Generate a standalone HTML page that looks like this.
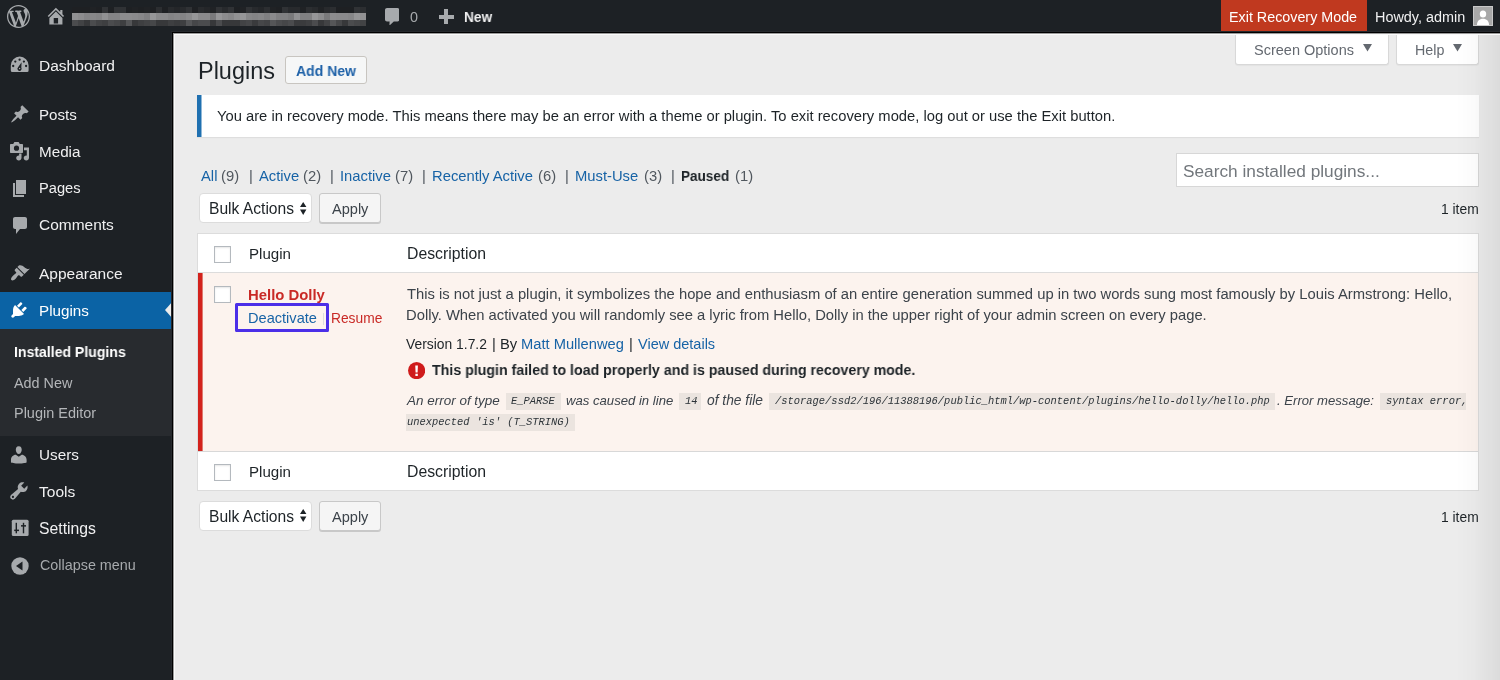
<!DOCTYPE html>
<html><head><meta charset="utf-8"><style>
html,body{margin:0;padding:0;width:1500px;height:680px;overflow:hidden;background:#ececec}
.t{position:absolute;white-space:pre;will-change:transform;}
.r{position:absolute;}
</style></head><body>
<div class="r" style="left:0px;top:0px;width:1500px;height:680px;background:#ececec"></div>
<div class="r" style="left:0px;top:0px;width:173px;height:680px;background:#1d2125"></div>
<div class="r" style="left:0px;top:0px;width:1500px;height:33px;background:#1d2125"></div>
<svg class="r" style="left:7px;top:5px" width="23" height="23" viewBox="0 0 20 20"><path fill="#a7aaad" d="M20 10c0-5.51-4.49-10-10-10C4.48 0 0 4.49 0 10c0 5.52 4.48 10 10 10 5.51 0 10-4.48 10-10zM7.78 15.37L4.37 6.22c.55-.02 1.17-.08 1.17-.08.5-.06.44-1.13-.06-1.11 0 0-1.45.11-2.37.11-.18 0-.37 0-.58-.01C4.12 2.69 6.87 1.11 10 1.11c2.33 0 4.45.87 6.05 2.34-.68-.11-1.65.39-1.65 1.58 0 .74.45 1.36.9 2.1.35.61.55 1.36.55 2.46 0 1.49-1.4 5-1.4 5l-3.03-8.37c.54-.02.82-.17.82-.17.5-.05.44-1.25-.06-1.22 0 0-1.44.12-2.38.12-.87 0-2.33-.12-2.33-.12-.5-.03-.56 1.2-.06 1.22l.92.08 1.26 3.41zM17.41 10c.24-.64.74-1.87.43-4.25.7 1.29 1.05 2.71 1.05 4.25 0 3.29-1.73 6.24-4.4 7.78.97-2.59 1.94-5.2 2.92-7.78zM6.1 18.09C3.12 16.65 1.11 13.53 1.11 10c0-1.3.23-2.48.72-3.59C3.25 10.3 4.67 14.2 6.1 18.09zm4.03-6.63l2.58 6.98c-.86.29-1.76.45-2.71.45-.79 0-1.57-.11-2.29-.33.81-2.38 1.62-4.74 2.42-7.1z"/></svg>
<svg class="r" style="left:45.3px;top:5.3px" width="21.8" height="21.8" viewBox="0 0 20 20"><path fill="#a7aaad" d="M16 8.5l1.53 1.53-1.06 1.06L10 4.62l-6.47 6.47-1.06-1.06L10 2.5l4 4v-2h2v4zm-6-2.46l6 5.99V18H4v-5.97zM12 17v-5H8v5h4z"/></svg>
<div class="r" style="left:72px;top:13px;width:6px;height:7px;background:rgb(145,145,147)"></div>
<div class="r" style="left:72px;top:20px;width:6px;height:6px;background:rgb(75,76,78)"></div>
<div class="r" style="left:72px;top:7px;width:6px;height:6px;background:rgb(30,32,35)"></div>
<div class="r" style="left:78px;top:13px;width:6px;height:7px;background:rgb(140,140,142)"></div>
<div class="r" style="left:78px;top:20px;width:6px;height:6px;background:rgb(66,67,69)"></div>
<div class="r" style="left:78px;top:7px;width:6px;height:6px;background:rgb(30,32,35)"></div>
<div class="r" style="left:84px;top:13px;width:6px;height:7px;background:rgb(132,132,134)"></div>
<div class="r" style="left:84px;top:20px;width:6px;height:6px;background:rgb(55,56,58)"></div>
<div class="r" style="left:84px;top:7px;width:6px;height:6px;background:rgb(30,32,35)"></div>
<div class="r" style="left:90px;top:13px;width:6px;height:7px;background:rgb(135,135,137)"></div>
<div class="r" style="left:90px;top:20px;width:6px;height:6px;background:rgb(75,76,78)"></div>
<div class="r" style="left:90px;top:7px;width:6px;height:6px;background:rgb(32,34,37)"></div>
<div class="r" style="left:96px;top:13px;width:6px;height:7px;background:rgb(132,132,134)"></div>
<div class="r" style="left:96px;top:20px;width:6px;height:6px;background:rgb(66,67,69)"></div>
<div class="r" style="left:96px;top:7px;width:6px;height:6px;background:rgb(30,32,35)"></div>
<div class="r" style="left:102px;top:13px;width:6px;height:7px;background:rgb(145,145,147)"></div>
<div class="r" style="left:102px;top:20px;width:6px;height:6px;background:rgb(62,63,65)"></div>
<div class="r" style="left:102px;top:7px;width:6px;height:6px;background:rgb(48,50,53)"></div>
<div class="r" style="left:108px;top:13px;width:6px;height:7px;background:rgb(132,132,134)"></div>
<div class="r" style="left:108px;top:20px;width:6px;height:6px;background:rgb(75,76,78)"></div>
<div class="r" style="left:108px;top:7px;width:6px;height:6px;background:rgb(30,32,35)"></div>
<div class="r" style="left:114px;top:13px;width:6px;height:7px;background:rgb(132,132,134)"></div>
<div class="r" style="left:114px;top:20px;width:6px;height:6px;background:rgb(70,71,73)"></div>
<div class="r" style="left:114px;top:7px;width:6px;height:6px;background:rgb(48,50,53)"></div>
<div class="r" style="left:120px;top:13px;width:6px;height:7px;background:rgb(140,140,142)"></div>
<div class="r" style="left:120px;top:20px;width:6px;height:6px;background:rgb(62,63,65)"></div>
<div class="r" style="left:120px;top:7px;width:6px;height:6px;background:rgb(48,50,53)"></div>
<div class="r" style="left:126px;top:13px;width:6px;height:7px;background:rgb(140,140,142)"></div>
<div class="r" style="left:126px;top:20px;width:6px;height:6px;background:rgb(85,86,88)"></div>
<div class="r" style="left:126px;top:7px;width:6px;height:6px;background:rgb(30,32,35)"></div>
<div class="r" style="left:132px;top:13px;width:6px;height:7px;background:rgb(138,138,140)"></div>
<div class="r" style="left:132px;top:20px;width:6px;height:6px;background:rgb(55,56,58)"></div>
<div class="r" style="left:132px;top:7px;width:6px;height:6px;background:rgb(32,34,37)"></div>
<div class="r" style="left:138px;top:13px;width:6px;height:7px;background:rgb(135,135,137)"></div>
<div class="r" style="left:138px;top:20px;width:6px;height:6px;background:rgb(62,63,65)"></div>
<div class="r" style="left:138px;top:7px;width:6px;height:6px;background:rgb(30,32,35)"></div>
<div class="r" style="left:144px;top:13px;width:6px;height:7px;background:rgb(128,128,130)"></div>
<div class="r" style="left:144px;top:20px;width:6px;height:6px;background:rgb(66,67,69)"></div>
<div class="r" style="left:144px;top:7px;width:6px;height:6px;background:rgb(32,34,37)"></div>
<div class="r" style="left:150px;top:13px;width:6px;height:7px;background:rgb(150,150,152)"></div>
<div class="r" style="left:150px;top:20px;width:6px;height:6px;background:rgb(70,71,73)"></div>
<div class="r" style="left:150px;top:7px;width:6px;height:6px;background:rgb(30,32,35)"></div>
<div class="r" style="left:156px;top:13px;width:6px;height:7px;background:rgb(138,138,140)"></div>
<div class="r" style="left:156px;top:20px;width:6px;height:6px;background:rgb(55,56,58)"></div>
<div class="r" style="left:156px;top:7px;width:6px;height:6px;background:rgb(44,46,49)"></div>
<div class="r" style="left:162px;top:13px;width:6px;height:7px;background:rgb(138,138,140)"></div>
<div class="r" style="left:162px;top:20px;width:6px;height:6px;background:rgb(55,56,58)"></div>
<div class="r" style="left:162px;top:7px;width:6px;height:6px;background:rgb(30,32,35)"></div>
<div class="r" style="left:168px;top:13px;width:6px;height:7px;background:rgb(132,132,134)"></div>
<div class="r" style="left:168px;top:20px;width:6px;height:6px;background:rgb(62,63,65)"></div>
<div class="r" style="left:168px;top:7px;width:6px;height:6px;background:rgb(40,42,45)"></div>
<div class="r" style="left:174px;top:13px;width:6px;height:7px;background:rgb(135,135,137)"></div>
<div class="r" style="left:174px;top:20px;width:6px;height:6px;background:rgb(58,59,61)"></div>
<div class="r" style="left:174px;top:7px;width:6px;height:6px;background:rgb(36,38,41)"></div>
<div class="r" style="left:180px;top:13px;width:6px;height:7px;background:rgb(132,132,134)"></div>
<div class="r" style="left:180px;top:20px;width:6px;height:6px;background:rgb(62,63,65)"></div>
<div class="r" style="left:180px;top:7px;width:6px;height:6px;background:rgb(40,42,45)"></div>
<div class="r" style="left:186px;top:13px;width:6px;height:7px;background:rgb(138,138,140)"></div>
<div class="r" style="left:186px;top:20px;width:6px;height:6px;background:rgb(85,86,88)"></div>
<div class="r" style="left:186px;top:7px;width:6px;height:6px;background:rgb(48,50,53)"></div>
<div class="r" style="left:192px;top:13px;width:6px;height:7px;background:rgb(150,150,152)"></div>
<div class="r" style="left:192px;top:20px;width:6px;height:6px;background:rgb(70,71,73)"></div>
<div class="r" style="left:192px;top:7px;width:6px;height:6px;background:rgb(30,32,35)"></div>
<div class="r" style="left:198px;top:13px;width:6px;height:7px;background:rgb(138,138,140)"></div>
<div class="r" style="left:198px;top:20px;width:6px;height:6px;background:rgb(75,76,78)"></div>
<div class="r" style="left:198px;top:7px;width:6px;height:6px;background:rgb(40,42,45)"></div>
<div class="r" style="left:204px;top:13px;width:6px;height:7px;background:rgb(138,138,140)"></div>
<div class="r" style="left:204px;top:20px;width:6px;height:6px;background:rgb(75,76,78)"></div>
<div class="r" style="left:204px;top:7px;width:6px;height:6px;background:rgb(36,38,41)"></div>
<div class="r" style="left:210px;top:13px;width:6px;height:7px;background:rgb(122,122,124)"></div>
<div class="r" style="left:210px;top:20px;width:6px;height:6px;background:rgb(55,56,58)"></div>
<div class="r" style="left:210px;top:7px;width:6px;height:6px;background:rgb(32,34,37)"></div>
<div class="r" style="left:216px;top:13px;width:6px;height:7px;background:rgb(150,150,152)"></div>
<div class="r" style="left:216px;top:20px;width:6px;height:6px;background:rgb(75,76,78)"></div>
<div class="r" style="left:216px;top:7px;width:6px;height:6px;background:rgb(48,50,53)"></div>
<div class="r" style="left:222px;top:13px;width:6px;height:7px;background:rgb(140,140,142)"></div>
<div class="r" style="left:222px;top:20px;width:6px;height:6px;background:rgb(55,56,58)"></div>
<div class="r" style="left:222px;top:7px;width:6px;height:6px;background:rgb(40,42,45)"></div>
<div class="r" style="left:228px;top:13px;width:6px;height:7px;background:rgb(135,135,137)"></div>
<div class="r" style="left:228px;top:20px;width:6px;height:6px;background:rgb(55,56,58)"></div>
<div class="r" style="left:228px;top:7px;width:6px;height:6px;background:rgb(48,50,53)"></div>
<div class="r" style="left:234px;top:13px;width:6px;height:7px;background:rgb(145,145,147)"></div>
<div class="r" style="left:234px;top:20px;width:6px;height:6px;background:rgb(55,56,58)"></div>
<div class="r" style="left:234px;top:7px;width:6px;height:6px;background:rgb(30,32,35)"></div>
<div class="r" style="left:240px;top:13px;width:6px;height:7px;background:rgb(150,150,152)"></div>
<div class="r" style="left:240px;top:20px;width:6px;height:6px;background:rgb(66,67,69)"></div>
<div class="r" style="left:240px;top:7px;width:6px;height:6px;background:rgb(32,34,37)"></div>
<div class="r" style="left:246px;top:13px;width:6px;height:7px;background:rgb(135,135,137)"></div>
<div class="r" style="left:246px;top:20px;width:6px;height:6px;background:rgb(70,71,73)"></div>
<div class="r" style="left:246px;top:7px;width:6px;height:6px;background:rgb(48,50,53)"></div>
<div class="r" style="left:252px;top:13px;width:6px;height:7px;background:rgb(132,132,134)"></div>
<div class="r" style="left:252px;top:20px;width:6px;height:6px;background:rgb(58,59,61)"></div>
<div class="r" style="left:252px;top:7px;width:6px;height:6px;background:rgb(40,42,45)"></div>
<div class="r" style="left:258px;top:13px;width:6px;height:7px;background:rgb(135,135,137)"></div>
<div class="r" style="left:258px;top:20px;width:6px;height:6px;background:rgb(70,71,73)"></div>
<div class="r" style="left:258px;top:7px;width:6px;height:6px;background:rgb(36,38,41)"></div>
<div class="r" style="left:264px;top:13px;width:6px;height:7px;background:rgb(128,128,130)"></div>
<div class="r" style="left:264px;top:20px;width:6px;height:6px;background:rgb(66,67,69)"></div>
<div class="r" style="left:264px;top:7px;width:6px;height:6px;background:rgb(44,46,49)"></div>
<div class="r" style="left:270px;top:13px;width:6px;height:7px;background:rgb(138,138,140)"></div>
<div class="r" style="left:270px;top:20px;width:6px;height:6px;background:rgb(85,86,88)"></div>
<div class="r" style="left:270px;top:7px;width:6px;height:6px;background:rgb(32,34,37)"></div>
<div class="r" style="left:276px;top:13px;width:6px;height:7px;background:rgb(128,128,130)"></div>
<div class="r" style="left:276px;top:20px;width:6px;height:6px;background:rgb(75,76,78)"></div>
<div class="r" style="left:276px;top:7px;width:6px;height:6px;background:rgb(30,32,35)"></div>
<div class="r" style="left:282px;top:13px;width:6px;height:7px;background:rgb(128,128,130)"></div>
<div class="r" style="left:282px;top:20px;width:6px;height:6px;background:rgb(70,71,73)"></div>
<div class="r" style="left:282px;top:7px;width:6px;height:6px;background:rgb(48,50,53)"></div>
<div class="r" style="left:288px;top:13px;width:6px;height:7px;background:rgb(122,122,124)"></div>
<div class="r" style="left:288px;top:20px;width:6px;height:6px;background:rgb(75,76,78)"></div>
<div class="r" style="left:288px;top:7px;width:6px;height:6px;background:rgb(40,42,45)"></div>
<div class="r" style="left:294px;top:13px;width:6px;height:7px;background:rgb(145,145,147)"></div>
<div class="r" style="left:294px;top:20px;width:6px;height:6px;background:rgb(58,59,61)"></div>
<div class="r" style="left:294px;top:7px;width:6px;height:6px;background:rgb(40,42,45)"></div>
<div class="r" style="left:300px;top:13px;width:6px;height:7px;background:rgb(128,128,130)"></div>
<div class="r" style="left:300px;top:20px;width:6px;height:6px;background:rgb(58,59,61)"></div>
<div class="r" style="left:300px;top:7px;width:6px;height:6px;background:rgb(32,34,37)"></div>
<div class="r" style="left:306px;top:13px;width:6px;height:7px;background:rgb(128,128,130)"></div>
<div class="r" style="left:306px;top:20px;width:6px;height:6px;background:rgb(62,63,65)"></div>
<div class="r" style="left:306px;top:7px;width:6px;height:6px;background:rgb(44,46,49)"></div>
<div class="r" style="left:312px;top:13px;width:6px;height:7px;background:rgb(150,150,152)"></div>
<div class="r" style="left:312px;top:20px;width:6px;height:6px;background:rgb(75,76,78)"></div>
<div class="r" style="left:312px;top:7px;width:6px;height:6px;background:rgb(40,42,45)"></div>
<div class="r" style="left:318px;top:13px;width:6px;height:7px;background:rgb(140,140,142)"></div>
<div class="r" style="left:318px;top:20px;width:6px;height:6px;background:rgb(55,56,58)"></div>
<div class="r" style="left:318px;top:7px;width:6px;height:6px;background:rgb(32,34,37)"></div>
<div class="r" style="left:324px;top:13px;width:6px;height:7px;background:rgb(122,122,124)"></div>
<div class="r" style="left:324px;top:20px;width:6px;height:6px;background:rgb(66,67,69)"></div>
<div class="r" style="left:324px;top:7px;width:6px;height:6px;background:rgb(40,42,45)"></div>
<div class="r" style="left:330px;top:13px;width:6px;height:7px;background:rgb(140,140,142)"></div>
<div class="r" style="left:330px;top:20px;width:6px;height:6px;background:rgb(85,86,88)"></div>
<div class="r" style="left:330px;top:7px;width:6px;height:6px;background:rgb(44,46,49)"></div>
<div class="r" style="left:336px;top:13px;width:6px;height:7px;background:rgb(138,138,140)"></div>
<div class="r" style="left:336px;top:20px;width:6px;height:6px;background:rgb(70,71,73)"></div>
<div class="r" style="left:336px;top:7px;width:6px;height:6px;background:rgb(30,32,35)"></div>
<div class="r" style="left:342px;top:13px;width:6px;height:7px;background:rgb(138,138,140)"></div>
<div class="r" style="left:342px;top:20px;width:6px;height:6px;background:rgb(55,56,58)"></div>
<div class="r" style="left:342px;top:7px;width:6px;height:6px;background:rgb(30,32,35)"></div>
<div class="r" style="left:348px;top:13px;width:6px;height:7px;background:rgb(135,135,137)"></div>
<div class="r" style="left:348px;top:20px;width:6px;height:6px;background:rgb(75,76,78)"></div>
<div class="r" style="left:348px;top:7px;width:6px;height:6px;background:rgb(30,32,35)"></div>
<div class="r" style="left:354px;top:13px;width:6px;height:7px;background:rgb(150,150,152)"></div>
<div class="r" style="left:354px;top:20px;width:6px;height:6px;background:rgb(70,71,73)"></div>
<div class="r" style="left:354px;top:7px;width:6px;height:6px;background:rgb(48,50,53)"></div>
<div class="r" style="left:360px;top:13px;width:6px;height:7px;background:rgb(145,145,147)"></div>
<div class="r" style="left:360px;top:20px;width:6px;height:6px;background:rgb(66,67,69)"></div>
<div class="r" style="left:360px;top:7px;width:6px;height:6px;background:rgb(44,46,49)"></div>
<svg class="r" style="left:384.6px;top:7.9px" width="14.5" height="17.6" viewBox="0 0 14.5 17.6"><path fill="#a7aaad" d="M2 0h10.5c1.1 0 2 .9 2 2v9.4c0 1.1-.9 2-2 2H8.8l-4.4 4.2.2-4.2H2c-1.1 0-2-.9-2-2V2C0 .9.9 0 2 0z"/></svg>
<div class="t" style="left:410.00px;top:9.00px;font-size:14.350px;line-height:16px;font-weight:400;font-style:normal;color:#a7aaad;font-family:'Liberation Sans',sans-serif;">0</div>
<div class="r" style="left:438.7px;top:14.5px;width:15.100000000000023px;height:4.300000000000001px;background:#a7aaad"></div>
<div class="r" style="left:443.6px;top:9.4px;width:4.2999999999999545px;height:14.4px;background:#a7aaad"></div>
<div class="t" style="left:463.50px;top:9.00px;font-size:14.600px;line-height:16px;font-weight:700;font-style:normal;color:#f0f0f1;font-family:'Liberation Sans',sans-serif;transform:scaleX(0.9376);transform-origin:0.00px 0;">New</div>
<div class="r" style="left:1221px;top:0px;width:146px;height:33px;background:#c0391f"></div>
<div class="t" style="left:1228.80px;top:8.80px;font-size:14.324px;line-height:16px;font-weight:400;font-style:normal;color:#fff;font-family:'Liberation Sans',sans-serif;">Exit Recovery Mode</div>
<div class="t" style="left:1374.70px;top:8.80px;font-size:14.425px;line-height:16px;font-weight:400;font-style:normal;color:#f0f0f1;font-family:'Liberation Sans',sans-serif;">Howdy, admin</div>
<div class="r" style="left:1473px;top:6px;width:20px;height:20px;background:#a8a8a8;border:1px solid #c8c8c8;box-sizing:border-box"></div>
<svg class="r" style="left:1473px;top:6px" width="20" height="20" viewBox="0 0 20 20"><ellipse cx="10" cy="8" rx="3.2" ry="3.6" fill="#fff"/><path d="M4 19c0-4 2.5-6.2 6-6.2s6 2.2 6 6.2z" fill="#fff"/></svg>
<div class="t" style="left:39.40px;top:56.90px;font-size:15.542px;line-height:17px;font-weight:400;font-style:normal;color:#f0f0f1;font-family:'Liberation Sans',sans-serif;">Dashboard</div>
<svg class="r" style="left:10px;top:56px" width="20" height="17" viewBox="0 0 20 17"><path fill="#a7aaad" fill-rule="evenodd" d="M0.8 9.5A8.9 8.9 0 0 1 18.6 9.5V14.6Q18.6 16.1 17.1 16.1H2.3Q0.8 16.1 0.8 14.6zM8.45 3.70a1.15 1.15 0 1 0 2.30 0a1.15 1.15 0 1 0 -2.30 0zM4.15 5.60a1.15 1.15 0 1 0 2.30 0a1.15 1.15 0 1 0 -2.30 0zM12.75 5.60a1.15 1.15 0 1 0 2.30 0a1.15 1.15 0 1 0 -2.30 0zM2.05 10.00a1.15 1.15 0 1 0 2.30 0a1.15 1.15 0 1 0 -2.30 0zM14.95 10.00a1.15 1.15 0 1 0 2.30 0a1.15 1.15 0 1 0 -2.30 0zM11.6 6.2L11.3 11.6A2.1 2.1 0 1 1 8.1 11.2z"/><circle cx="9.6" cy="12.6" r=".75" fill="#a7aaad"/></svg>
<div class="t" style="left:39.40px;top:106.10px;font-size:15.120px;line-height:17px;font-weight:400;font-style:normal;color:#f0f0f1;font-family:'Liberation Sans',sans-serif;">Posts</div>
<svg class="r" style="left:9.5px;top:103.5px" width="20" height="20" viewBox="0 0 20 20"><path fill="#a7aaad" d="M10.44 3.02l1.82-1.82 6.36 6.35-1.83 1.82c-1.05-.68-2.48-.57-3.41.36l-.75.75c-.92.93-1.04 2.35-.35 3.41l-1.83 1.82-2.41-2.41-2.8 2.79c-.42.42-3.38 2.71-3.8 2.29s1.86-3.39 2.28-3.81l2.79-2.79L4.1 9.36l1.83-1.82c1.05.69 2.48.57 3.4-.36l.75-.75c.93-.92 1.05-2.35.36-3.41z"/></svg>
<div class="t" style="left:39.40px;top:142.60px;font-size:15.238px;line-height:17px;font-weight:400;font-style:normal;color:#f0f0f1;font-family:'Liberation Sans',sans-serif;">Media</div>
<svg class="r" style="left:9.3px;top:141px" width="21" height="20" viewBox="0 0 20 20"><path fill="#a7aaad" fill-rule="evenodd" d="M1.5 3h2.2l1.2-2h4.2l1.2 2h2.2c.6 0 1 .4 1 1v7c0 .6-.4 1-1 1h-11c-.6 0-1-.4-1-1V4c0-.6.4-1 1-1zM7 4.6a2.6 2.6 0 1 0 0 5.2 2.6 2.6 0 0 0 0-5.2z"/><path fill="#a7aaad" d="M14.5 6.5h5v10.3c0 1.5-1.2 2.7-2.7 2.7s-2.6-1-2.6-2.4 1.2-2.5 2.6-2.5c.1 0 .3 0 .5.1V9.2h-2.8zM9.6 12.5h2.4v4.3c0 1.5-1.2 2.7-2.7 2.7S6.7 18.5 6.7 17.1s1.2-2.5 2.6-2.5c.1 0 .2 0 .3.1z"/></svg>
<div class="t" style="left:39.40px;top:180.40px;font-size:14.674px;line-height:16px;font-weight:400;font-style:normal;color:#f0f0f1;font-family:'Liberation Sans',sans-serif;">Pages</div>
<svg class="r" style="left:9.5px;top:178.5px" width="20" height="20" viewBox="0 0 20 20"><path fill="#a7aaad" d="M6 1h10v14H6z"/><path fill="#a7aaad" d="M3 4h2v12h9v2H3z"/></svg>
<div class="t" style="left:39.40px;top:216.00px;font-size:15.471px;line-height:17px;font-weight:400;font-style:normal;color:#f0f0f1;font-family:'Liberation Sans',sans-serif;">Comments</div>
<svg class="r" style="left:9.5px;top:214.5px" width="20" height="20" viewBox="0 0 20 20"><path fill="#a7aaad" d="M5 2h10c1.1 0 2 .9 2 2v8c0 1.1-.9 2-2 2h-5l-4 5v-5H5c-1.1 0-2-.9-2-2V4c0-1.1.9-2 2-2z"/></svg>
<div class="t" style="left:39.40px;top:264.90px;font-size:15.496px;line-height:17px;font-weight:400;font-style:normal;color:#f0f0f1;font-family:'Liberation Sans',sans-serif;">Appearance</div>
<svg class="r" style="left:9.5px;top:263px" width="20" height="20" viewBox="0 0 20 20"><path fill="#a7aaad" d="M14.48 11.06L7.41 3.99l1.5-1.5c.5-.56 2.3-.47 3.51.32 1.21.8 1.43 1.28 2.91 2.1 1.18.64 2.45 1.26 4.45.85zm-.71.71L6.7 4.7 4.93 6.47c-.39.39-.39 1.02 0 1.41l1.06 1.06c.39.39.39 1.03 0 1.42-.6.6-1.43 1.11-2.21 1.69-.35.26-.7.53-1.01.84C1.43 14.23.4 16.08 1.4 17.07c.99 1 2.84-.03 4.18-1.36.31-.31.58-.66.85-1.02.57-.78 1.08-1.61 1.69-2.21.39-.39 1.02-.39 1.41 0l1.06 1.06c.39.39 1.02.39 1.41 0z"/></svg>
<div class="r" style="left:0px;top:292px;width:173px;height:37px;background:#0b63a5"></div>
<svg class="r" style="left:165px;top:301px" width="8" height="18" viewBox="0 0 8 18"><path d="M8 0L0 9l8 9z" fill="#ececec"/></svg>
<div class="t" style="left:39.40px;top:301.50px;font-size:15.213px;line-height:17px;font-weight:400;font-style:normal;color:#fff;font-family:'Liberation Sans',sans-serif;">Plugins</div>
<svg class="r" style="left:9px;top:300px" width="20" height="20" viewBox="0 0 20 20"><path fill="#fff" d="M13.11 4.36L9.87 7.6 8 5.73l3.24-3.24c.35-.34 1.05-.2 1.56.32.52.51.66 1.21.31 1.55zm-8 1.77l.91-1.12 9.01 9.01-1.19.84c-.71.71-2.63 1.16-3.82 1.16H6.14L4.9 17.26c-.59.59-1.54.59-2.12 0-.59-.58-.59-1.53 0-2.12l1.24-1.24v-3.88c0-1.13.4-3.19 1.09-3.89zm7.26 3.97l3.24-3.24c.34-.35 1.04-.21 1.55.31.52.51.66 1.21.31 1.55l-3.24 3.25z"/></svg>
<div class="r" style="left:0px;top:329px;width:173px;height:107px;background:#282b2f"></div>
<div class="t" style="left:13.50px;top:344.10px;font-size:14.500px;line-height:16px;font-weight:700;font-style:normal;color:#fff;font-family:'Liberation Sans',sans-serif;transform:scaleX(0.9696);transform-origin:0.00px 0;">Installed Plugins</div>
<div class="t" style="left:13.50px;top:374.60px;font-size:14.384px;line-height:16px;font-weight:400;font-style:normal;color:#b4b6b9;font-family:'Liberation Sans',sans-serif;">Add New</div>
<div class="t" style="left:13.50px;top:405.00px;font-size:14.480px;line-height:16px;font-weight:400;font-style:normal;color:#b4b6b9;font-family:'Liberation Sans',sans-serif;">Plugin Editor</div>
<div class="t" style="left:39.40px;top:446.20px;font-size:15.287px;line-height:17px;font-weight:400;font-style:normal;color:#f0f0f1;font-family:'Liberation Sans',sans-serif;">Users</div>
<svg class="r" style="left:8.2px;top:443.5px" width="21.6" height="21.6" viewBox="0 0 20 20"><path fill="#a7aaad" d="M10 9.25c-2.27 0-2.73-3.44-2.73-3.44C7 4.02 7.82 2 9.97 2c2.16 0 2.98 2.02 2.71 3.81 0 0-.41 3.44-2.68 3.44zm0 2.57L12.72 10c2.39 0 4.52 2.33 4.52 4.53v2.49s-3.65 1.13-7.24 1.13c-3.65 0-7.24-1.13-7.24-1.13v-2.49c0-2.25 1.94-4.48 4.47-4.48z"/></svg>
<div class="t" style="left:39.40px;top:482.80px;font-size:15.546px;line-height:17px;font-weight:400;font-style:normal;color:#f0f0f1;font-family:'Liberation Sans',sans-serif;">Tools</div>
<svg class="r" style="left:8.3px;top:479.6px" width="21.8" height="21.8" viewBox="0 0 20 20"><path fill="#a7aaad" d="M16.68 9.77c-1.34 1.34-3.3 1.67-4.95.99l-5.41 6.52c-.99.99-2.59.99-3.58 0s-.99-2.59 0-3.57l6.52-5.42c-.68-1.65-.35-3.61.99-4.95 1.28-1.28 3.12-1.62 4.72-1.06l-2.89 2.89 2.82 2.82 2.86-2.87c.53 1.58.18 3.39-1.08 4.65zM3.81 16.21c.4.39 1.04.39 1.43 0 .4-.4.4-1.04 0-1.43-.39-.4-1.03-.4-1.43 0-.39.39-.39 1.03 0 1.43z"/></svg>
<div class="t" style="left:39.40px;top:519.50px;font-size:15.768px;line-height:17px;font-weight:400;font-style:normal;color:#f0f0f1;font-family:'Liberation Sans',sans-serif;">Settings</div>
<svg class="r" style="left:10px;top:519px" width="20" height="20" viewBox="0 0 20 20"><rect x="1.8" y="0.8" width="16.8" height="16.2" rx="1.5" fill="#a7aaad"/><g fill="#1d2125"><rect x="5.6" y="3.8" width="1.4" height="10.5"/><rect x="4.2" y="10.6" width="4.8" height="1.5"/><rect x="12.8" y="3.8" width="1.4" height="10.5"/><rect x="11" y="6.1" width="5" height="1.5"/></g></svg>
<div class="t" style="left:39.50px;top:556.80px;font-size:14.378px;line-height:16px;font-weight:400;font-style:normal;color:#a7aaad;font-family:'Liberation Sans',sans-serif;">Collapse menu</div>
<svg class="r" style="left:9.5px;top:555.5px" width="20" height="20" viewBox="0 0 20 20"><circle cx="10" cy="10" r="8.7" fill="#a7aaad"/><path d="M12.5 5.5v9L6 10z" fill="#1d2125"/></svg>
<div class="r" style="left:1235px;top:33px;width:154px;height:32px;background:#fff;border:1px solid #d8d8d8;border-top:none;border-radius:0 0 3px 3px;box-sizing:border-box;box-shadow:0 1px 1px rgba(0,0,0,.04)"></div>
<div class="t" style="left:1253.90px;top:42.00px;font-size:14.518px;line-height:16px;font-weight:400;font-style:normal;color:#646970;font-family:'Liberation Sans',sans-serif;">Screen Options</div>
<svg class="r" style="left:1362.5px;top:44px" width="9" height="8" viewBox="0 0 9 8"><path d="M0 0h9L4.5 7.5z" fill="#646970"/></svg>
<div class="r" style="left:1396px;top:33px;width:83px;height:32px;background:#fff;border:1px solid #d8d8d8;border-top:none;border-radius:0 0 3px 3px;box-sizing:border-box;box-shadow:0 1px 1px rgba(0,0,0,.04)"></div>
<div class="t" style="left:1414.70px;top:42.00px;font-size:14.258px;line-height:16px;font-weight:400;font-style:normal;color:#646970;font-family:'Liberation Sans',sans-serif;">Help</div>
<svg class="r" style="left:1452.5px;top:44px" width="9" height="8" viewBox="0 0 9 8"><path d="M0 0h9L4.5 7.5z" fill="#646970"/></svg>
<div class="t" style="left:198.30px;top:57.70px;font-size:23.476px;line-height:26px;font-weight:400;font-style:normal;color:#1d2327;font-family:'Liberation Sans',sans-serif;">Plugins</div>
<div class="r" style="left:285px;top:56px;width:82px;height:28px;background:#f6f7f7;border:1px solid #c8c5c0;border-radius:3px;box-sizing:border-box"></div>
<div class="t" style="left:296.00px;top:63.00px;font-size:14.600px;line-height:16px;font-weight:700;font-style:normal;color:#1f62a8;font-family:'Liberation Sans',sans-serif;transform:scaleX(0.9602);transform-origin:0.00px 0;">Add New</div>
<div class="r" style="left:197px;top:95px;width:1282px;height:42px;background:#fff;border-left:4px solid #1f70b0;box-sizing:border-box;box-shadow:0 1px 1px rgba(0,0,0,.06)"></div>
<div class="r" style="left:201px;top:95px;width:1px;height:42px;background:#8fb8d8"></div>
<div class="t" style="left:217.30px;top:108.30px;font-size:14.756px;line-height:16px;font-weight:400;font-style:normal;color:#1d2327;font-family:'Liberation Sans',sans-serif;">You are in recovery mode. This means there may be an error with a theme or plugin. To exit recovery mode, log out or use the Exit button.</div>
<div class="t" style="left:201.00px;top:168.00px;font-size:14.770px;line-height:16px;font-weight:400;font-style:normal;color:#1763a6;font-family:'Liberation Sans',sans-serif;">All</div>
<div class="t" style="left:221.00px;top:168.00px;font-size:14.770px;line-height:16px;font-weight:400;font-style:normal;color:#50575e;font-family:'Liberation Sans',sans-serif;">(9)</div>
<div class="t" style="left:249.00px;top:168.00px;font-size:14.770px;line-height:16px;font-weight:400;font-style:normal;color:#50575e;font-family:'Liberation Sans',sans-serif;">|</div>
<div class="t" style="left:259.00px;top:168.00px;font-size:14.770px;line-height:16px;font-weight:400;font-style:normal;color:#1763a6;font-family:'Liberation Sans',sans-serif;">Active</div>
<div class="t" style="left:303.00px;top:168.00px;font-size:14.770px;line-height:16px;font-weight:400;font-style:normal;color:#50575e;font-family:'Liberation Sans',sans-serif;">(2)</div>
<div class="t" style="left:330.30px;top:168.00px;font-size:14.770px;line-height:16px;font-weight:400;font-style:normal;color:#50575e;font-family:'Liberation Sans',sans-serif;">|</div>
<div class="t" style="left:340.00px;top:168.00px;font-size:14.770px;line-height:16px;font-weight:400;font-style:normal;color:#1763a6;font-family:'Liberation Sans',sans-serif;">Inactive</div>
<div class="t" style="left:395.00px;top:168.00px;font-size:14.770px;line-height:16px;font-weight:400;font-style:normal;color:#50575e;font-family:'Liberation Sans',sans-serif;">(7)</div>
<div class="t" style="left:421.70px;top:168.00px;font-size:14.770px;line-height:16px;font-weight:400;font-style:normal;color:#50575e;font-family:'Liberation Sans',sans-serif;">|</div>
<div class="t" style="left:431.70px;top:168.00px;font-size:14.770px;line-height:16px;font-weight:400;font-style:normal;color:#1763a6;font-family:'Liberation Sans',sans-serif;">Recently Active</div>
<div class="t" style="left:537.80px;top:168.00px;font-size:14.770px;line-height:16px;font-weight:400;font-style:normal;color:#50575e;font-family:'Liberation Sans',sans-serif;">(6)</div>
<div class="t" style="left:564.70px;top:168.00px;font-size:14.770px;line-height:16px;font-weight:400;font-style:normal;color:#50575e;font-family:'Liberation Sans',sans-serif;">|</div>
<div class="t" style="left:574.50px;top:168.00px;font-size:14.770px;line-height:16px;font-weight:400;font-style:normal;color:#1763a6;font-family:'Liberation Sans',sans-serif;">Must-Use</div>
<div class="t" style="left:644.00px;top:168.00px;font-size:14.770px;line-height:16px;font-weight:400;font-style:normal;color:#50575e;font-family:'Liberation Sans',sans-serif;">(3)</div>
<div class="t" style="left:670.50px;top:168.00px;font-size:14.770px;line-height:16px;font-weight:400;font-style:normal;color:#50575e;font-family:'Liberation Sans',sans-serif;">|</div>
<div class="t" style="left:680.80px;top:168.00px;font-size:14.770px;line-height:16px;font-weight:700;font-style:normal;color:#1d2327;font-family:'Liberation Sans',sans-serif;transform:scaleX(0.9180);transform-origin:0.00px 0;">Paused</div>
<div class="t" style="left:735.00px;top:168.00px;font-size:14.770px;line-height:16px;font-weight:400;font-style:normal;color:#50575e;font-family:'Liberation Sans',sans-serif;">(1)</div>
<div class="r" style="left:1176px;top:153px;width:303px;height:34px;background:#fff;border:1px solid #d7d7d7;box-sizing:border-box"></div>
<div class="t" style="left:1182.70px;top:161.30px;font-size:17.271px;line-height:20px;font-weight:400;font-style:normal;color:#72777c;font-family:'Liberation Sans',sans-serif;">Search installed plugins...</div>
<div class="r" style="left:199px;top:193px;width:113px;height:30px;background:#fff;border:1px solid #dcdcdc;border-radius:4px;box-sizing:border-box"></div>
<div class="t" style="left:209.00px;top:200.00px;font-size:15.611px;line-height:17px;font-weight:400;font-style:normal;color:#1d2327;font-family:'Liberation Sans',sans-serif;">Bulk Actions</div>
<svg class="r" style="left:300.2px;top:201.6px" width="6.4" height="13" viewBox="0 0 6.4 13"><path d="M3.2 0L6.4 5H0zM0 7.6h6.4L3.2 13z" fill="#1d2327"/></svg>
<div class="r" style="left:319px;top:193px;width:62px;height:30px;background:#f5f5f5;border:1px solid #c8c8c8;border-radius:3px;box-sizing:border-box;box-shadow:0 1px 0 #c8c8c8"></div>
<div class="t" style="left:331.60px;top:201.00px;font-size:14.560px;line-height:16px;font-weight:400;font-style:normal;color:#3c434a;font-family:'Liberation Sans',sans-serif;">Apply</div>
<div class="t" style="left:1441.00px;top:200.90px;font-size:13.835px;line-height:16px;font-weight:400;font-style:normal;color:#1d2327;font-family:'Liberation Sans',sans-serif;">1 item</div>
<div class="r" style="left:197px;top:233px;width:1282px;height:258px;background:#fff;border:1px solid #dcdcdc;box-sizing:border-box"></div>
<div class="r" style="left:198px;top:272px;width:1280px;height:180px;background:#fcf3ee;border-top:1px solid #dcdcdc;border-bottom:1px solid #d8d8d8;box-sizing:border-box"></div>
<div class="r" style="left:198px;top:273px;width:4px;height:178px;background:#d3221c"></div>
<div class="r" style="left:202px;top:273px;width:1px;height:178px;background:#e07a70"></div>
<div class="r" style="left:214px;top:246px;width:17px;height:17px;background:#fff;border:1px solid #b4b9be;box-sizing:border-box;box-shadow:inset 0 1px 2px rgba(0,0,0,.1)"></div>
<div class="t" style="left:249.00px;top:245.00px;font-size:15.108px;line-height:17px;font-weight:400;font-style:normal;color:#1d2327;font-family:'Liberation Sans',sans-serif;">Plugin</div>
<div class="t" style="left:407.00px;top:245.00px;font-size:15.800px;line-height:17px;font-weight:400;font-style:normal;color:#1d2327;font-family:'Liberation Sans',sans-serif;">Description</div>
<div class="r" style="left:214px;top:286px;width:17px;height:17px;background:#fff;border:1px solid #b4b9be;box-sizing:border-box;box-shadow:inset 0 1px 2px rgba(0,0,0,.1)"></div>
<div class="t" style="left:248.00px;top:287.40px;font-size:14.894px;line-height:16px;font-weight:700;font-style:normal;color:#c92a26;font-family:'Liberation Sans',sans-serif;">Hello Dolly</div>
<div class="t" style="left:248.00px;top:310.00px;font-size:14.603px;line-height:16px;font-weight:400;font-style:normal;color:#1763a6;font-family:'Liberation Sans',sans-serif;">Deactivate</div>
<div class="r" style="left:323px;top:313px;width:1px;height:12px;background:#ddd"></div>
<div class="t" style="left:330.60px;top:311.00px;font-size:13.799px;line-height:15px;font-weight:400;font-style:normal;color:#c92a26;font-family:'Liberation Sans',sans-serif;">Resume</div>
<div class="r" style="left:235px;top:303px;width:94px;height:29px;border:3px solid #4b2ee8;border-radius:1.5px;box-sizing:border-box"></div>
<div class="t" style="left:406.60px;top:286.40px;font-size:14.792px;line-height:16px;font-weight:400;font-style:normal;color:#3c434a;font-family:'Liberation Sans',sans-serif;">This is not just a plugin, it symbolizes the hope and enthusiasm of an entire generation summed up in two words sung most famously by Louis Armstrong: Hello,</div>
<div class="t" style="left:406.00px;top:307.40px;font-size:14.781px;line-height:16px;font-weight:400;font-style:normal;color:#3c434a;font-family:'Liberation Sans',sans-serif;">Dolly. When activated you will randomly see a lyric from Hello, Dolly in the upper right of your admin screen on every page.</div>
<div class="t" style="left:406.40px;top:336.00px;font-size:13.870px;line-height:16px;font-weight:400;font-style:normal;color:#1d2327;font-family:'Liberation Sans',sans-serif;">Version 1.7.2</div>
<div class="t" style="left:491.80px;top:336.00px;font-size:14.770px;line-height:16px;font-weight:400;font-style:normal;color:#1d2327;font-family:'Liberation Sans',sans-serif;">|</div>
<div class="t" style="left:500.00px;top:336.00px;font-size:14.770px;line-height:16px;font-weight:400;font-style:normal;color:#1d2327;font-family:'Liberation Sans',sans-serif;">By</div>
<div class="t" style="left:520.60px;top:336.00px;font-size:14.704px;line-height:16px;font-weight:400;font-style:normal;color:#1763a6;font-family:'Liberation Sans',sans-serif;">Matt Mullenweg</div>
<div class="t" style="left:628.80px;top:336.00px;font-size:14.770px;line-height:16px;font-weight:400;font-style:normal;color:#1d2327;font-family:'Liberation Sans',sans-serif;">|</div>
<div class="t" style="left:637.80px;top:336.00px;font-size:14.511px;line-height:16px;font-weight:400;font-style:normal;color:#1763a6;font-family:'Liberation Sans',sans-serif;">View details</div>
<svg class="r" style="left:408px;top:362.3px" width="17.2" height="17.2" viewBox="0 0 17 17"><circle cx="8.5" cy="8.5" r="8.5" fill="#cf1b1b"/><path d="M7.2 3.4h2.6l-.3 7H7.5z" fill="#fff"/><rect x="7.3" y="11.6" width="2.4" height="2.2" fill="#fff"/></svg>
<div class="t" style="left:432.00px;top:362.00px;font-size:14.770px;line-height:16px;font-weight:700;font-style:normal;color:#1d2327;font-family:'Liberation Sans',sans-serif;transform:scaleX(0.9611);transform-origin:0.00px 0;">This plugin failed to load properly and is paused during recovery mode.</div>
<div class="t" style="left:407.07px;top:393.00px;font-size:13.487px;line-height:15px;font-weight:400;font-style:italic;color:#3c434a;font-family:'Liberation Sans',sans-serif;">An error of type</div>
<div class="r" style="left:505.6px;top:393px;width:55.39999999999998px;height:17px;background:#ebe4df"></div>
<div class="t" style="left:511.10px;top:396.00px;font-size:10.450px;line-height:11px;font-weight:400;font-style:italic;color:#2c3338;font-family:'Liberation Mono',monospace;">E_PARSE</div>
<div class="t" style="left:565.60px;top:393.00px;font-size:13.146px;line-height:15px;font-weight:400;font-style:italic;color:#3c434a;font-family:'Liberation Sans',sans-serif;">was caused in line</div>
<div class="r" style="left:679.3px;top:393px;width:22.200000000000045px;height:17px;background:#ebe4df"></div>
<div class="t" style="left:684.80px;top:396.00px;font-size:10.450px;line-height:11px;font-weight:400;font-style:italic;color:#2c3338;font-family:'Liberation Mono',monospace;">14</div>
<div class="t" style="left:707.00px;top:393.00px;font-size:13.793px;line-height:15px;font-weight:400;font-style:italic;color:#3c434a;font-family:'Liberation Sans',sans-serif;">of the file</div>
<div class="r" style="left:769.3px;top:393px;width:505.9000000000001px;height:17px;background:#ebe4df"></div>
<div class="t" style="left:774.80px;top:396.00px;font-size:10.450px;line-height:11px;font-weight:400;font-style:italic;color:#2c3338;font-family:'Liberation Mono',monospace;">/storage/ssd2/196/11388196/public_html/wp-content/plugins/hello-dolly/hello.php</div>
<div class="t" style="left:1276.80px;top:393.00px;font-size:13.126px;line-height:15px;font-weight:400;font-style:italic;color:#3c434a;font-family:'Liberation Sans',sans-serif;">. Error message:</div>
<div class="r" style="left:1380px;top:393px;width:85.59999999999991px;height:17px;background:#ebe4df"></div>
<div class="t" style="left:1385.50px;top:396.00px;font-size:10.450px;line-height:11px;font-weight:400;font-style:italic;color:#2c3338;font-family:'Liberation Mono',monospace;">syntax error,</div>
<div class="r" style="left:406px;top:414px;width:169px;height:17px;background:#ebe4df"></div>
<div class="t" style="left:406.50px;top:417.00px;font-size:10.450px;line-height:11px;font-weight:400;font-style:italic;color:#2c3338;font-family:'Liberation Mono',monospace;">unexpected &#x27;is&#x27; (T_STRING)</div>
<div class="r" style="left:214px;top:464px;width:17px;height:17px;background:#fff;border:1px solid #b4b9be;box-sizing:border-box;box-shadow:inset 0 1px 2px rgba(0,0,0,.1)"></div>
<div class="t" style="left:249.00px;top:463.40px;font-size:15.108px;line-height:17px;font-weight:400;font-style:normal;color:#1d2327;font-family:'Liberation Sans',sans-serif;">Plugin</div>
<div class="t" style="left:407.00px;top:463.40px;font-size:15.800px;line-height:17px;font-weight:400;font-style:normal;color:#1d2327;font-family:'Liberation Sans',sans-serif;">Description</div>
<div class="r" style="left:199px;top:501px;width:113px;height:30px;background:#fff;border:1px solid #dcdcdc;border-radius:4px;box-sizing:border-box"></div>
<div class="t" style="left:209.00px;top:507.60px;font-size:15.611px;line-height:17px;font-weight:400;font-style:normal;color:#1d2327;font-family:'Liberation Sans',sans-serif;">Bulk Actions</div>
<svg class="r" style="left:300.2px;top:509.20000000000005px" width="6.4" height="13" viewBox="0 0 6.4 13"><path d="M3.2 0L6.4 5H0zM0 7.6h6.4L3.2 13z" fill="#1d2327"/></svg>
<div class="r" style="left:319px;top:501px;width:62px;height:30px;background:#f5f5f5;border:1px solid #c8c8c8;border-radius:3px;box-sizing:border-box;box-shadow:0 1px 0 #c8c8c8"></div>
<div class="t" style="left:331.60px;top:508.60px;font-size:14.560px;line-height:16px;font-weight:400;font-style:normal;color:#3c434a;font-family:'Liberation Sans',sans-serif;">Apply</div>
<div class="t" style="left:1441.00px;top:508.60px;font-size:13.835px;line-height:16px;font-weight:400;font-style:normal;color:#1d2327;font-family:'Liberation Sans',sans-serif;">1 item</div>
<div class="r" style="left:1456px;top:33px;width:44px;height:647px;background:linear-gradient(to right,rgba(0,0,0,0),rgba(0,0,0,.015) 40%,rgba(0,0,0,.07))"></div>
<div class="r" style="left:171px;top:33px;width:1px;height:647px;background:#26292d"></div>
<div class="r" style="left:172px;top:32px;width:1px;height:648px;background:#000"></div>
<div class="r" style="left:173px;top:33px;width:1px;height:647px;background:#9a9a9a"></div>
<div class="r" style="left:174px;top:34px;width:1px;height:646px;background:#fafafa"></div>
<div class="r" style="left:171px;top:31px;width:1329px;height:1px;background:#26292d"></div>
<div class="r" style="left:172px;top:32px;width:1328px;height:1px;background:#000"></div>
<div class="r" style="left:173px;top:33px;width:1327px;height:1px;background:#9a9a9a"></div>
<div class="r" style="left:174px;top:34px;width:1326px;height:1px;background:#fafafa"></div>
</body></html>
